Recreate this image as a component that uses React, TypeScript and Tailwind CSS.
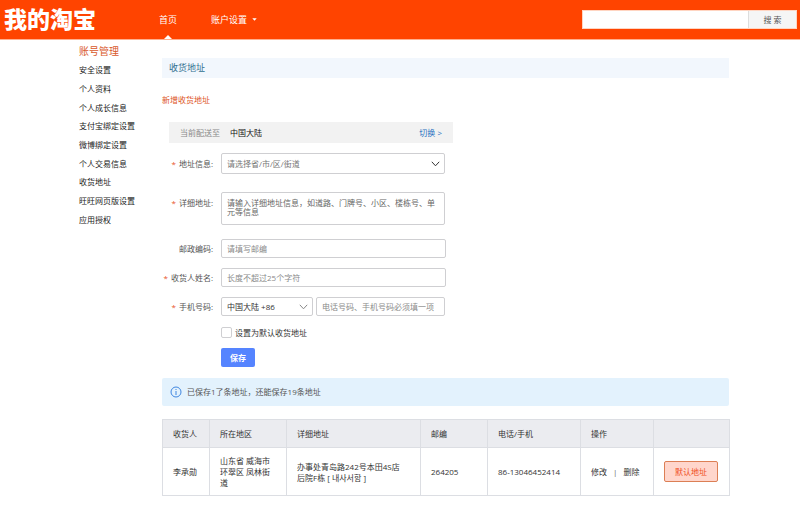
import React, { useState } from 'react'

const menu = [
  '安全设置',
  '个人资料',
  '个人成长信息',
  '支付宝绑定设置',
  '微博绑定设置',
  '个人交易信息',
  '收货地址',
  '旺旺网页版设置',
  '应用授权'
]

const columns = [
  { title: '收货人', width: 'w-[47px]' },
  { title: '所在地区', width: 'w-[77px]' },
  { title: '详细地址', width: 'w-[134px]' },
  { title: '邮编', width: 'w-[67px]' },
  { title: '电话/手机', width: 'w-[93px]' },
  { title: '操作', width: 'w-[73px]' },
  { title: '', width: 'w-[76px]' }
]

const inputClass = 'block w-full rounded-[2px] border border-[#cfcfd2] bg-white px-[5px] text-[#444] placeholder:text-[#8a8a8a] focus:outline-none'

const Header = () => (
  <header className="flex h-10 items-center border-b border-[#ffb090] bg-[#ff4400] pl-1 pr-[3px] text-white">
    <a href="#" className="w-[155px] text-[23px] font-black leading-none">我的淘宝</a>
    <nav className="flex h-full items-center gap-[34px] text-[9px]">
      <a href="#" className="relative flex h-full items-center">
        首页
        <svg className="absolute bottom-0 left-[5px]" width="8" height="4" viewBox="0 0 8 4" aria-hidden="true">
          <path d="M0 4L4 0L8 4Z" fill="#fff" />
        </svg>
      </a>
      <a href="#" className="flex items-center gap-[5px]">
        账户设置
        <svg width="5" height="3" viewBox="0 0 5 3" aria-hidden="true">
          <path d="M0.3 0.3H4.7L2.5 2.7Z" fill="#fff" />
        </svg>
      </a>
    </nav>
    <form className="ml-auto flex h-[19px] w-[215px] border border-[#ffd5c2]" onSubmit={(e) => e.preventDefault()}>
      <input type="text" name="q" aria-label="搜索" className="min-w-0 flex-1 bg-white px-1 text-[8px] text-[#444] focus:outline-none" />
      <button type="submit" className="w-12 border-l border-[#ddd] bg-[#f5f5f5] text-[8px] text-[#555]">搜 索</button>
    </form>
  </header>
)

const Label = ({ htmlFor, required, children }: { htmlFor: string; required?: boolean; children: React.ReactNode }) => (
  <label htmlFor={htmlFor} className="flex w-[51px] shrink-0 items-center justify-end gap-[3px] text-[#555]">
    {required && <span className="text-[#e8552d]">*</span>}
    <span className="whitespace-nowrap">{children}:</span>
  </label>
)

const Chevron = ({ color }: { color: string }) => (
  <svg className="pointer-events-none absolute right-[5px] top-1/2 -translate-y-1/2" width="9" height="6" viewBox="0 0 9 6" fill="none" stroke={color} aria-hidden="true">
    <path d="M0.8 0.8L4.5 4.8L8.2 0.8" />
  </svg>
)

const AddressForm = () => {
  const [form, setForm] = useState({ region: '', detail: '', post: '', name: '', code: '86', phone: '', isDefault: false })

  const handleChange = (e: React.ChangeEvent<HTMLInputElement | HTMLTextAreaElement | HTMLSelectElement>) => {
    setForm({
      ...form,
      [e.target.name]: e.target.value
    })
  }

  return (
    <form className="mt-[10px] flex w-[284px] flex-col text-[8px]" onSubmit={(e) => e.preventDefault()}>
      <div className="flex items-center gap-2">
        <Label htmlFor="region" required>地址信息</Label>
        <div className="relative w-[224px]">
          <select id="region" name="region" value={form.region} onChange={handleChange} className="block h-[21px] w-full appearance-none rounded-[2px] border border-[#cfcfd2] bg-white px-[5px] text-[#777] focus:outline-none">
            <option value="">请选择省/市/区/街道</option>
          </select>
          <Chevron color="#333" />
        </div>
      </div>
      <div className="mt-[18px] flex items-start gap-2 leading-[21px]">
        <Label htmlFor="detail" required>详细地址</Label>
        <div className="w-[224px]">
          <textarea id="detail" name="detail" value={form.detail} onChange={handleChange} placeholder="请输入详细地址信息，如道路、门牌号、小区、楼栋号、单元等信息" className="block h-[33px] w-full resize-none rounded-[2px] border border-[#cfcfd2] px-[5px] py-[5px] leading-[9px] text-[#444] placeholder:text-[#666] focus:outline-none" />
        </div>
      </div>
      <div className="mt-[14px] flex items-center gap-2">
        <Label htmlFor="post">邮政编码</Label>
        <div className="w-[225px]">
          <input id="post" name="post" type="text" value={form.post} onChange={handleChange} placeholder="请填写邮编" className={`${inputClass} h-[19px]`} />
        </div>
      </div>
      <div className="mt-[10px] flex items-center gap-2">
        <Label htmlFor="name" required>收货人姓名</Label>
        <div className="w-[225px]">
          <input id="name" name="name" type="text" value={form.name} onChange={handleChange} placeholder="长度不超过25个字符" className={`${inputClass} h-[19px]`} />
        </div>
      </div>
      <div className="mt-[10px] flex items-center gap-2">
        <Label htmlFor="phone" required>手机号码</Label>
        <div className="flex w-[224px] gap-[3px]">
          <div className="relative w-[92px]">
            <select name="code" aria-label="国家代码" value={form.code} onChange={handleChange} className="block h-[19px] w-full appearance-none rounded-[2px] border border-[#cfcfd2] bg-white px-[5px] text-[#333] focus:outline-none">
              <option value="86">中国大陆 +86</option>
            </select>
            <Chevron color="#888" />
          </div>
          <div className="flex-1">
            <input id="phone" name="phone" type="tel" value={form.phone} onChange={handleChange} placeholder="电话号码、手机号码必须填一项" className={`${inputClass} h-[19px]`} />
          </div>
        </div>
      </div>
      <label className="ml-[59px] mt-[11px] flex items-center gap-[3px] leading-[11px] text-[#333]">
        <input
          type="checkbox"
          checked={form.isDefault}
          onChange={(e) => setForm({ ...form, isDefault: e.target.checked })}
          className="size-[11px] appearance-none rounded-[2px] border border-[#cfcfd2] bg-white checked:bg-[#5584ff]"
        />
        设置为默认收货地址
      </label>
      <button type="submit" className="ml-[59px] mt-[10px] h-[19px] w-[34px] rounded-[2px] bg-[#5584ff] font-bold text-white">保存</button>
    </form>
  )
}

const AddressTable = () => (
  <table className="mt-[13px] w-full table-fixed border-collapse text-left text-[8px] leading-[11px] text-[#333]">
    <thead>
      <tr className="h-7 bg-[#ebecf0]">
        {columns.map((col, index) => (
          <th key={index} className={`${col.width} border border-[#dcdee3] pl-[10px] font-normal`}>{col.title}</th>
        ))}
      </tr>
    </thead>
    <tbody>
      <tr className="h-12 [&>td]:border [&>td]:border-[#dcdee3] [&>td]:pl-[10px]">
        <td>李承勋</td>
        <td>山东省 威海市<br />环翠区 凤林街<br />道</td>
        <td>办事处青岛路242号本田4S店<br />后院F栋 [ 내사서함 ]</td>
        <td>264205</td>
        <td>86-13046452414</td>
        <td>
          <div className="flex gap-[6px]">
            <a href="#">修改</a>
            <span className="text-[#666]">|</span>
            <a href="#">删除</a>
          </div>
        </td>
        <td>
          <button type="button" className="block h-[21px] w-[54px] rounded-[2px] border border-[#dc7f55] bg-[#ffd6cc] text-[#f0501e]">默认地址</button>
        </td>
      </tr>
    </tbody>
  </table>
)

const App = () => {
  return (
    <div className="min-h-screen bg-white font-['Open_Sans','Noto_Sans_CJK_SC',sans-serif]">
      <Header />
      <div className="flex pl-[79px] pr-[71px]">
        <aside className="w-[83px] shrink-0 pt-1">
          <h2 className="text-[10px] leading-[14px] text-[#d9582b]">账号管理</h2>
          <ul className="mt-[3px] grid h-[168px] grid-rows-9 text-[8px] text-[#222]">
            {menu.map((item) => (
              <li key={item} className="flex items-center">
                <a href="#" className="leading-none">{item}</a>
              </li>
            ))}
          </ul>
        </aside>
        <main className="min-w-0 flex-1 pt-[18px]">
          <h1 className="bg-[#f2f7fd] pl-[7px] text-[9px] leading-5 text-[#31708f]">收货地址</h1>
          <h2 className="mt-4 text-[8px] leading-3 text-[#dd5427]">新增收货地址</h2>
          <div className="ml-[7px] mt-4 flex h-[21px] w-[284px] items-center bg-[#f2f2f2] px-[11px] text-[8px]">
            <span className="text-[#888]">当前配送至</span>
            <span className="ml-[10px] text-[#111]">中国大陆</span>
            <a href="#" className="ml-auto text-[#1f70c1]">切换 &gt;</a>
          </div>
          <AddressForm />
          <div className="mt-[11px] flex h-7 items-center gap-[5px] rounded-[2px] bg-[#e3f2fd] pl-2 text-[8px] text-[#555]">
            <svg width="12" height="12" viewBox="0 0 12 12" fill="none" stroke="#3f86e0" aria-hidden="true">
              <circle cx="6" cy="6" r="5" />
              <path d="M6 5V9M6 3V4" />
            </svg>
            <p>已保存1了条地址，还能保存19条地址</p>
          </div>
          <AddressTable />
        </main>
      </div>
    </div>
  )
}

export default App
